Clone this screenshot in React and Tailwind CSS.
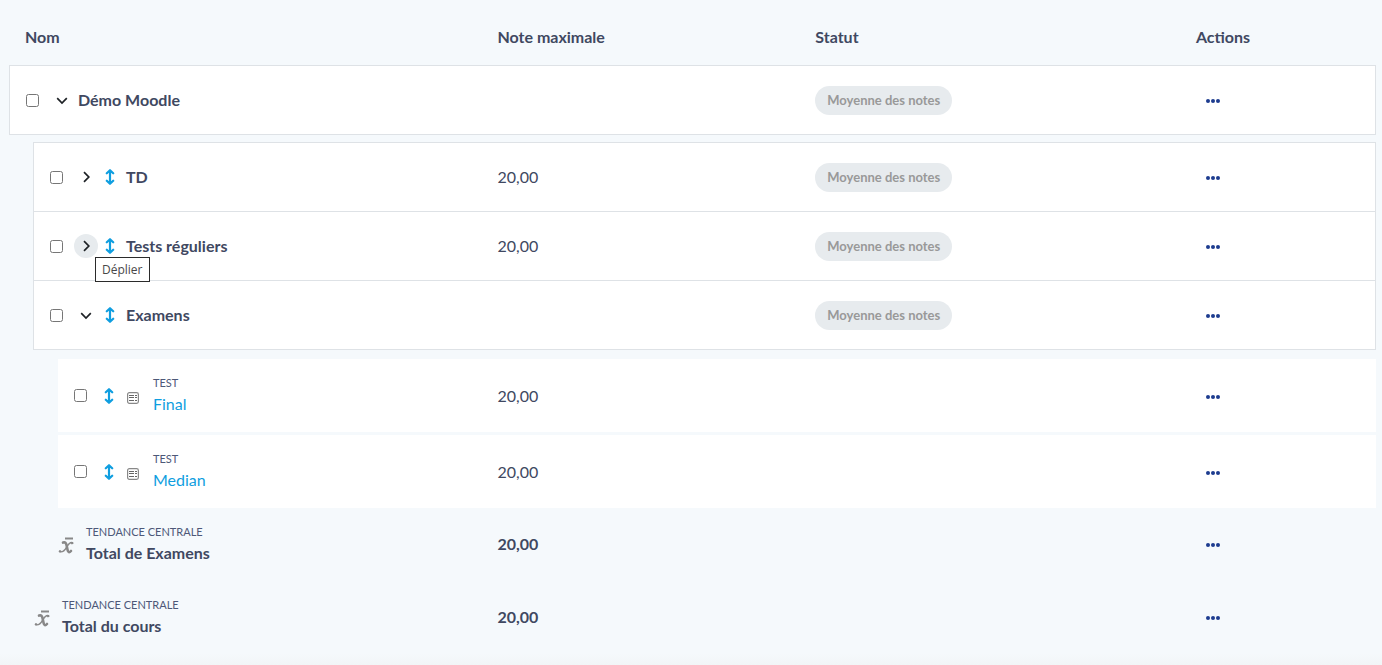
import { useState } from 'react';

const ROWS = [
  { id: 'course', type: 'category', level: 0, name: 'Démo Moodle', open: true, status: 'Moyenne des notes' },
  { id: 'td', type: 'category', level: 1, name: 'TD', max: '20,00', status: 'Moyenne des notes' },
  { id: 'tests', type: 'category', level: 1, name: 'Tests réguliers', max: '20,00', status: 'Moyenne des notes', hover: true },
  { id: 'exams', type: 'category', level: 1, name: 'Examens', open: true, status: 'Moyenne des notes' },
  { id: 'final', type: 'item', level: 2, name: 'Final', kind: 'Test', max: '20,00' },
  { id: 'median', type: 'item', level: 2, name: 'Median', kind: 'Test', max: '20,00' },
  { id: 'total-exams', type: 'total', level: 2, name: 'Total de Examens', kind: 'Tendance centrale', max: '20,00' },
  { id: 'total-course', type: 'total', level: 1, name: 'Total du cours', kind: 'Tendance centrale', max: '20,00' },
];

function Chevron({ open }) {
  return (
    <svg viewBox="0 0 24 24" className="size-6" fill="none" stroke="#1d2125" strokeWidth="1.7" aria-hidden="true">
      {open ? <path d="M7.2 10.2l4.8 4.8 4.8-4.8" /> : <path d="M10 7.2l4.8 4.8-4.8 4.8" />}
    </svg>
  );
}

function MoveIcon() {
  return (
    <svg viewBox="0 0 16 16" className="size-4" fill="none" stroke="#0f9ee0" strokeWidth="2.2" strokeLinejoin="round" strokeLinecap="round" aria-hidden="true">
      <path d="M8 1.5v13M4.8 4.3L8 1.2l3.2 3.1M4.8 11.7L8 14.8l3.2-3.1" />
    </svg>
  );
}

function QuizIcon() {
  return (
    <svg viewBox="0 0 12 12" className="size-3" fill="none" stroke="#888" aria-hidden="true">
      <rect x="0.6" y="0.6" width="10.8" height="10.8" rx="1.8" strokeWidth="1.2" />
      <path d="M2 3.5h5M2 5.5h5M2 8.5h5M8 3.5h2M8 5.5h2M8 8.5h2" stroke="#666" strokeWidth="1" />
    </svg>
  );
}

function MeanIcon() {
  return (
    <svg viewBox="0 0 16 18" className="mt-[3px] h-[18px] w-4" fill="none" stroke="#888" strokeLinecap="round" aria-hidden="true">
      <path d="M7 1.5h8" strokeWidth="2" strokeLinecap="butt" />
      <path d="M5 5.6c2.3-.8 3 .3 3.5 2.4l1.1 5c.5 2.400 1.600 3 3.400 1" strokeWidth="2.600" />
      <path d="M14.500 5.700c-2.500-1-4.200 1.600-5.600 4s-3.400 6.300-7.300 5" strokeWidth="1.400" />
      <circle cx="14" cy="6.200" r="0.800" fill="#888" />
      <circle cx="2" cy="14.300" r="0.800" fill="#888" />
    </svg>
  );
}

function Checkbox({ label, checked, onChange }) {
  return (
    <input
      type="checkbox"
      aria-label={label}
      checked={checked}
      onChange={onChange}
      className="size-[13px] shrink-0"
    />
  );
}

function CategoryName({ row, open, onToggle, checked, onCheck }) {
  return (
    <div className="flex items-center">
      <Checkbox label={`Sélectionner ${row.name}`} checked={checked} onChange={onCheck} />
      <div className="relative ml-[11px]">
        <button
          type="button"
          onClick={onToggle}
          aria-expanded={open}
          aria-label={open ? 'Replier' : 'Déplier'}
          className={`block size-6 rounded-full ${row.hover ? 'bg-[#e7ebee]' : ''}`}
        >
          <Chevron open={open} />
        </button>
        {row.hover && !open && (
          <span
            role="tooltip"
            className="absolute top-[23px] left-[21px] z-10 border border-[#2b2b2b] bg-white px-[6px] py-1 font-['Open_Sans',sans-serif] text-[12px] leading-[15px] whitespace-nowrap text-[#484848]"
          >
            Déplier
          </span>
        )}
      </div>
      {row.level > 0 && (
        <button type="button" aria-label={`Déplacer ${row.name}`} className="mr-1 ml-1">
          <MoveIcon />
        </button>
      )}
      <span className="ml-1 font-bold">{row.name}</span>
    </div>
  );
}

function KindLabel({ children }) {
  return <div className="text-[11px] leading-5 text-[#4d5878] uppercase">{children}</div>;
}

function ItemName({ row, checked, onCheck }) {
  return (
    <div className="flex items-center">
      <Checkbox label={`Sélectionner ${row.name}`} checked={checked} onChange={onCheck} />
      <button type="button" aria-label={`Déplacer ${row.name}`} className="ml-[14px]">
        <MoveIcon />
      </button>
      <span className="mt-1 ml-[10px]">
        <QuizIcon />
      </span>
      <div className="ml-[14px] pb-1">
        <KindLabel>{row.kind}</KindLabel>
        <a href="#" className="block leading-[22px] text-[#0f9ee0]">{row.name}</a>
      </div>
    </div>
  );
}

function TotalName({ row }) {
  return (
    <div className="flex items-center gap-3">
      <MeanIcon />
      <div className="pb-1">
        <KindLabel>{row.kind}</KindLabel>
        <div className="leading-[22px] font-bold">{row.name}</div>
      </div>
    </div>
  );
}

function ActionsButton({ name }) {
  return (
    <button type="button" aria-label={`Actions pour ${name}`} className="ml-2 block">
      <svg viewBox="0 0 18 18" className="size-[18px]" fill="#1d3c8f" aria-hidden="true">
        <circle cx="4" cy="10" r="2" />
        <circle cx="9" cy="10" r="2" />
        <circle cx="14" cy="10" r="2" />
      </svg>
    </button>
  );
}

function Spacer({ height }) {
  return (
    <tr aria-hidden="true">
      <td colSpan={6} className={height} />
    </tr>
  );
}

export default function App() {
  const [selected, setSelected] = useState([]);
  const [expanded, setExpanded] = useState(ROWS.filter((r) => r.open).map((r) => r.id));

  const flip = (list, id) => (list.includes(id) ? list.filter((x) => x !== id) : [...list, id]);

  const renderRow = (row) => {
    const isCategory = row.type === 'category';
    const isTotal = row.type === 'total';
    const closesGroup = row.id === 'course' || row.id === 'exams';
    const check = {
      checked: selected.includes(row.id),
      onCheck: () => setSelected((prev) => flip(prev, row.id)),
    };
    const cell = `${isCategory ? 'border-t border-[#dee2e6]' : ''} ${closesGroup ? 'border-b' : ''} ${isTotal ? '' : 'bg-white'}`;
    const height = closesGroup ? 'h-[70px]' : isCategory ? 'h-[69px]' : 'h-[73px]';

    return (
      <tr key={row.id} className={height}>
        {row.level > 0 && <td colSpan={row.level} />}
        <th
          scope="row"
          colSpan={3 - row.level}
          className={`${cell} text-left font-normal ${
            isTotal ? 'pl-px' : isCategory ? 'border-l pl-4' : 'border-l border-[#f5f9fc] pl-4'
          }`}
        >
          {isCategory && (
            <CategoryName
              row={row}
              open={expanded.includes(row.id)}
              onToggle={() => setExpanded((prev) => flip(prev, row.id))}
              {...check}
            />
          )}
          {row.type === 'item' && <ItemName row={row} {...check} />}
          {isTotal && <TotalName row={row} />}
        </th>
        <td className={`${cell} px-4 ${isTotal ? 'pb-[2px] font-bold' : ''}`}>{row.max}</td>
        <td className={`${cell} px-4`}>
          {row.status && (
            <span className="inline-block rounded-full bg-[#e7ebee] px-3 py-1 align-middle text-[13px] leading-[21px] font-bold text-[#999]">
              {row.status}
            </span>
          )}
        </td>
        <td className={`${cell} px-4 ${isCategory ? 'border-r' : ''} ${isTotal ? 'pb-[2px]' : ''}`}>
          <ActionsButton name={row.name} />
        </td>
      </tr>
    );
  };

  return (
    <main className="min-h-screen bg-[#f5f9fc] font-['Lato',sans-serif] text-[16px] leading-6 text-[#404861]">
      <div className="pt-2 pr-[6px] pl-[9px]">
        <table className="w-full table-fixed border-separate border-spacing-0">
          <colgroup>
            <col className="w-6" />
            <col className="w-6" />
            <col className="w-[31.05%]" />
            <col className="w-[23.25%]" />
            <col className="w-[27.85%]" />
            <col />
          </colgroup>
          <thead>
            <tr className="h-[57px] text-left">
              <th scope="col" colSpan={3} className="px-4 font-bold">Nom</th>
              <th scope="col" className="px-4 font-bold">Note maximale</th>
              <th scope="col" className="px-4 font-bold">Statut</th>
              <th scope="col" className="px-4 font-bold">Actions</th>
            </tr>
          </thead>
          <tbody>
            {renderRow(ROWS[0])}
            <Spacer height="h-[7px]" />
            {ROWS.slice(1, 4).map(renderRow)}
            <Spacer height="h-[9px]" />
            {renderRow(ROWS[4])}
            <Spacer height="h-[3px]" />
            {ROWS.slice(5).map(renderRow)}
          </tbody>
        </table>
      </div>
      <div className="h-[11px] bg-linear-to-b from-[#f5f9fc] to-[#f2f5f7]" />
    </main>
  );
}
